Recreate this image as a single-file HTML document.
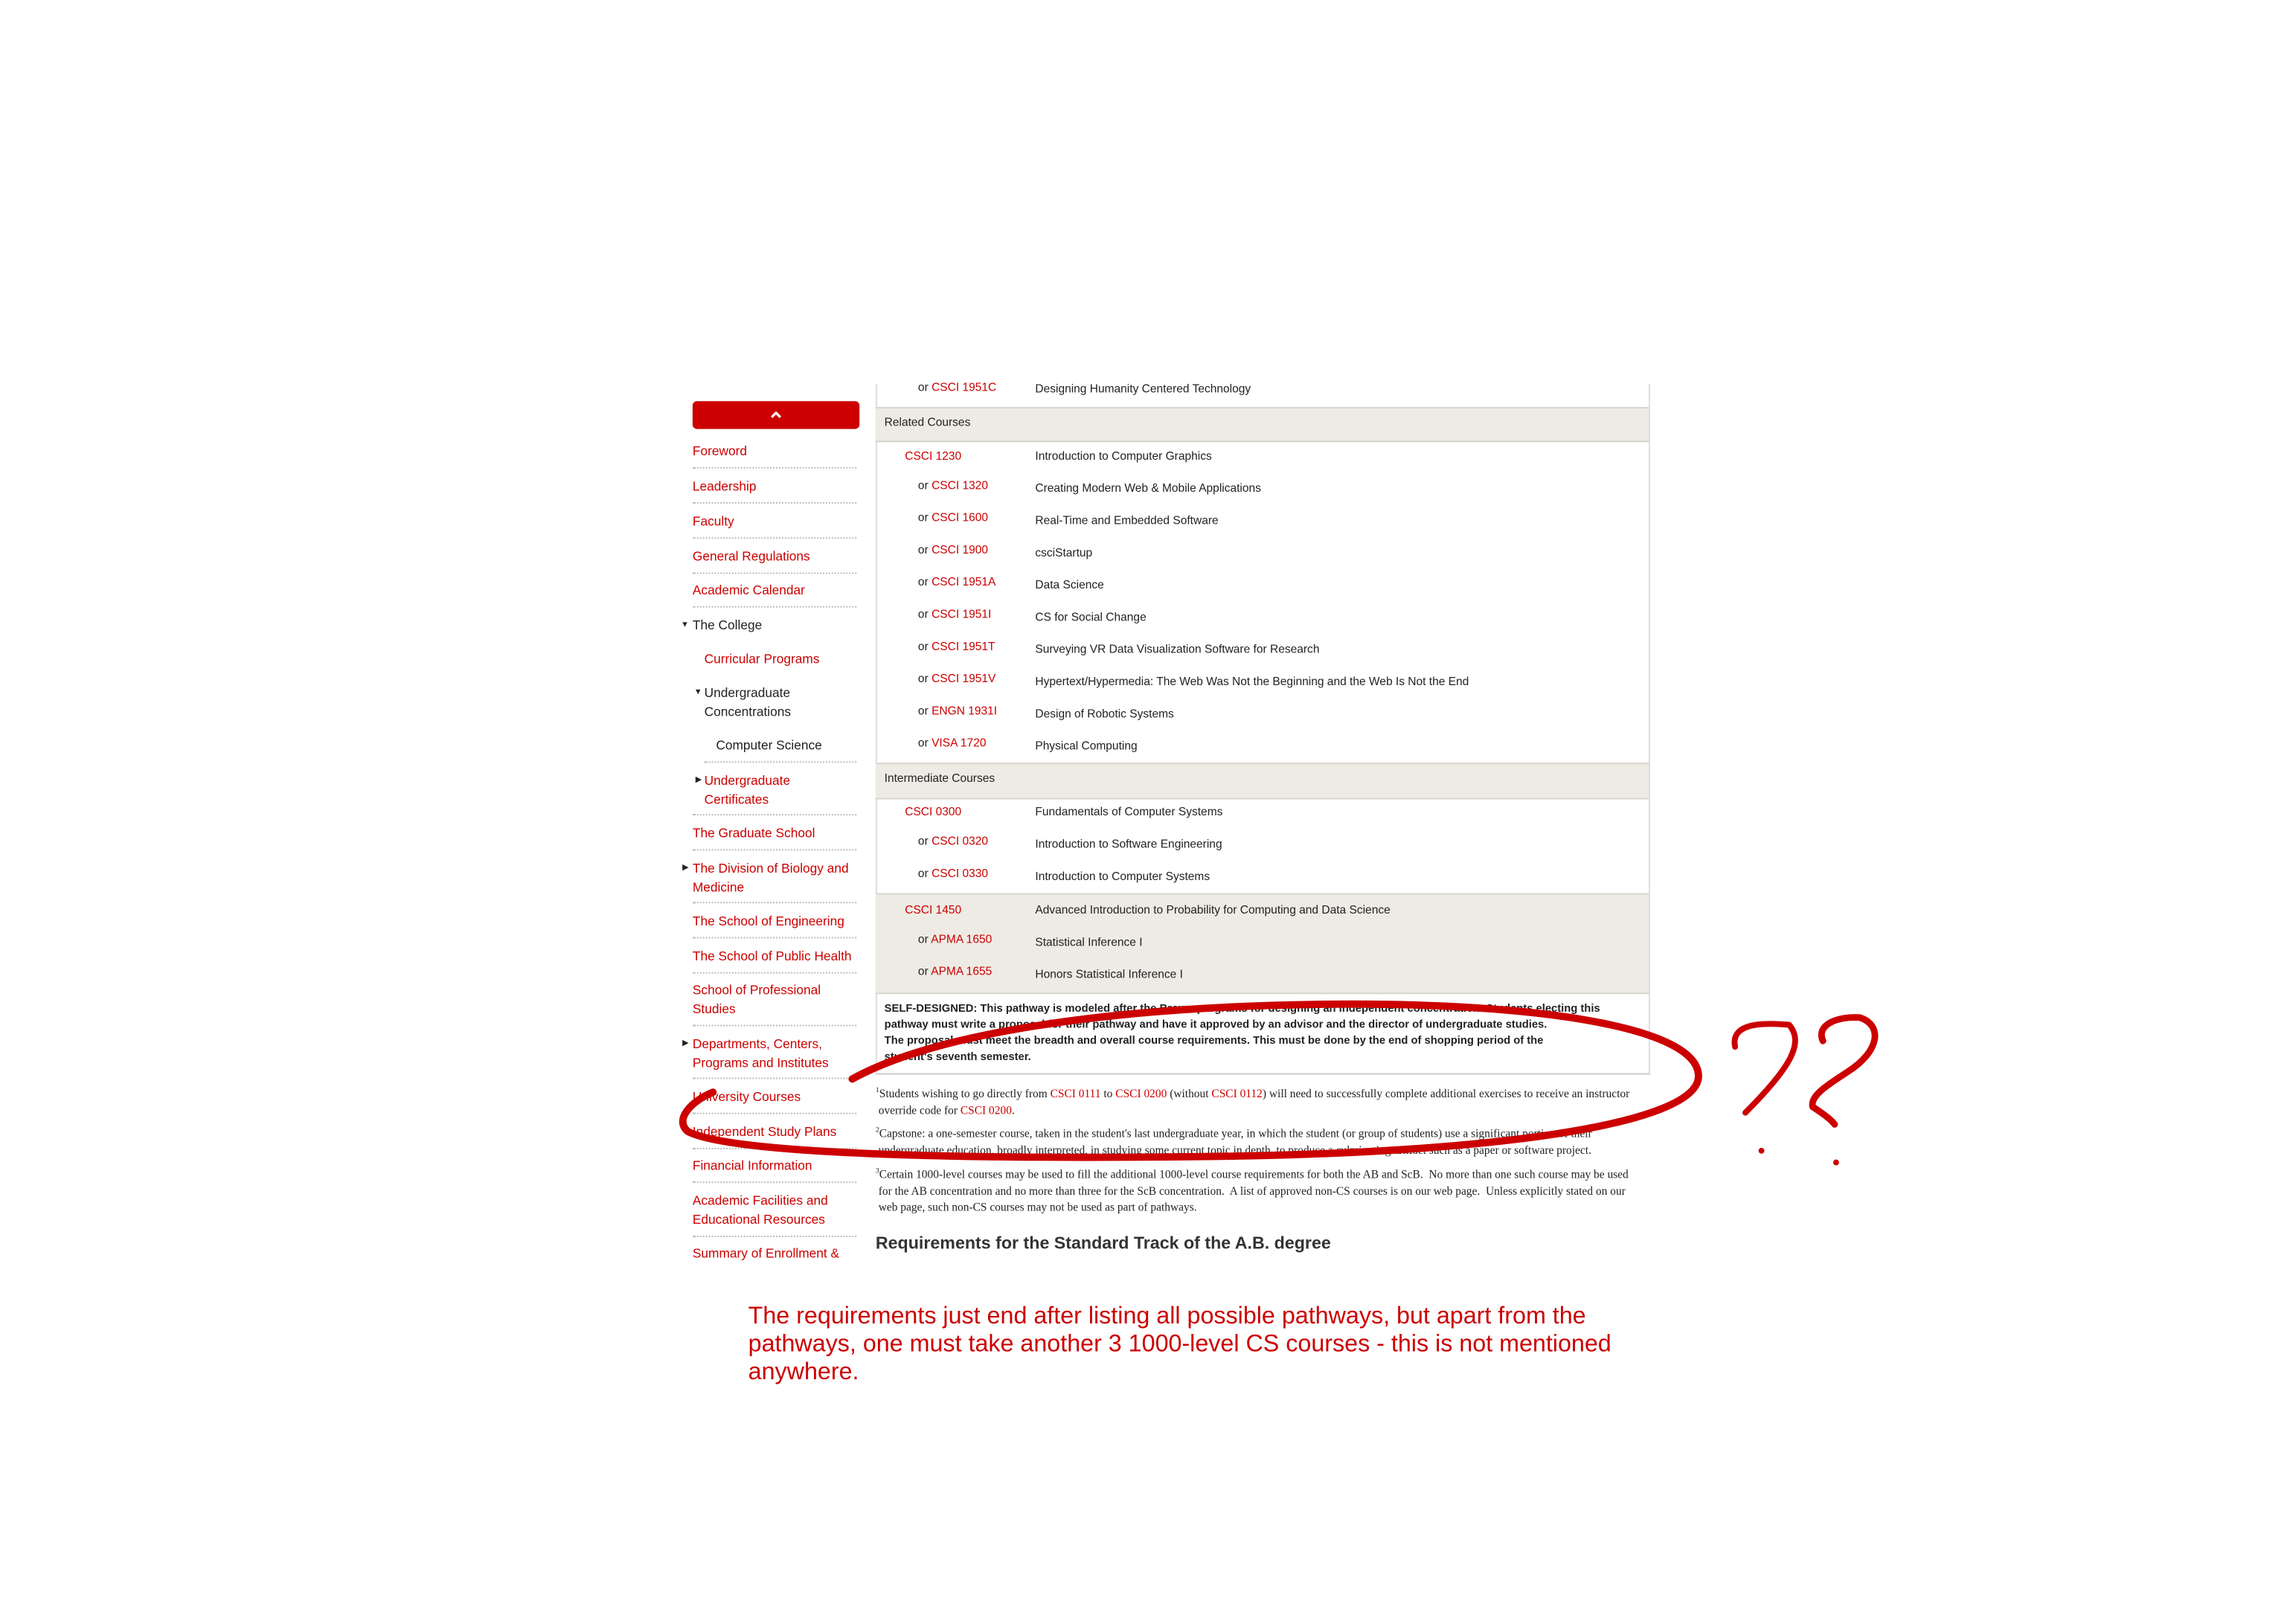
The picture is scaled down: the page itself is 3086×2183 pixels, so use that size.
<!DOCTYPE html>
<html><head><meta charset="utf-8">
<style>
html,body{margin:0;padding:0;background:#fff;}
body{width:3086px;height:2182px;overflow:hidden;position:relative;}
#w{position:absolute;left:0;top:0;width:1568px;height:1109px;transform:scale(1.968);transform-origin:0 0;font-family:"Liberation Sans",sans-serif;}
.a{position:absolute;white-space:nowrap;}
.nav{font-size:8.8px;color:#c00;line-height:12.5px;}
.blk{color:#222;}
.sep{position:absolute;left:473px;width:112px;border-top:1px dotted #bbb;}
.tri{position:absolute;font-size:5.5px;color:#222;}
.t{font-size:7.9px;color:#222;}
.r{color:#c00;}
.hdr{position:absolute;left:598px;width:528px;background:#eeebe5;border-top:1px solid #d8d5cf;border-bottom:1px solid #d8d5cf;}
.fn{font-family:"Liberation Serif",serif;font-size:7.85px;color:#222;line-height:11px;}
.note{font-size:16.4px;color:#c00;}
</style></head><body><div id="w">

<div class="a" style="left:473px;top:274px;width:114px;height:19px;background:#c00;border-radius:3px;"></div>
<svg class="a" style="left:526px;top:280px" width="8" height="6"><path d="M1 5 L4 2 L7 5" stroke="#fff" stroke-width="1.6" fill="none"/></svg>

<div class="a nav" style="left:473px;top:302px">Foreword</div><div class="sep" style="top:319px"></div>
<div class="a nav" style="left:473px;top:326px">Leadership</div><div class="sep" style="top:343px"></div>
<div class="a nav" style="left:473px;top:350px">Faculty</div><div class="sep" style="top:367px"></div>
<div class="a nav" style="left:473px;top:374px">General Regulations</div><div class="sep" style="top:391px"></div>
<div class="a nav" style="left:473px;top:397px">Academic Calendar</div><div class="sep" style="top:414px"></div>
<div class="tri" style="left:465px;top:424px">▼</div><div class="a nav blk" style="left:473px;top:421px">The College</div>
<div class="a nav" style="left:481px;top:444px">Curricular Programs</div>
<div class="tri" style="left:474px;top:470px">▼</div><div class="a nav blk" style="left:481px;top:467px">Undergraduate<br>Concentrations</div>
<div class="a nav blk" style="left:489px;top:503px">Computer Science</div><div class="sep" style="top:520px;left:481px;width:104px"></div>
<div class="tri" style="left:475px;top:530px">▶</div><div class="a nav" style="left:481px;top:527px">Undergraduate<br>Certificates</div><div class="sep" style="top:556px"></div>
<div class="a nav" style="left:473px;top:563px">The Graduate School</div><div class="sep" style="top:580px"></div>
<div class="tri" style="left:466px;top:590px">▶</div><div class="a nav" style="left:473px;top:587px">The Division of Biology and<br>Medicine</div><div class="sep" style="top:616px"></div>
<div class="a nav" style="left:473px;top:623px">The School of Engineering</div><div class="sep" style="top:640px"></div>
<div class="a nav" style="left:473px;top:647px">The School of Public Health</div><div class="sep" style="top:664px"></div>
<div class="a nav" style="left:473px;top:670px">School of Professional<br>Studies</div><div class="sep" style="top:700px"></div>
<div class="tri" style="left:466px;top:710px">▶</div><div class="a nav" style="left:473px;top:707px">Departments, Centers,<br>Programs and Institutes</div><div class="sep" style="top:736px"></div>
<div class="a nav" style="left:473px;top:743px">University Courses</div><div class="sep" style="top:760px"></div>
<div class="a nav" style="left:473px;top:767px">Independent Study Plans</div><div class="sep" style="top:784px"></div>
<div class="a nav" style="left:473px;top:790px">Financial Information</div><div class="sep" style="top:807px"></div>
<div class="a nav" style="left:473px;top:814px">Academic Facilities and<br>Educational Resources</div><div class="sep" style="top:844px"></div>
<div class="a nav" style="left:473px;top:850px">Summary of Enrollment &amp;</div>

<div class="a" style="left:598px;top:262px;width:527px;height:471px;border-left:1px solid #ddd;border-right:1px solid #ddd;border-bottom:1px solid #ccc;"></div>
<div class="hdr" style="top:278px;height:22px"></div>
<div class="hdr" style="top:521px;height:23px"></div>
<div class="hdr" style="top:610px;height:67px"></div>

<div class="a t" style="left:627px;top:260px">or <span class="r">CSCI 1951C</span></div><div class="a t" style="left:707px;top:261px">Designing Humanity Centered Technology</div>
<div class="a t" style="left:604px;top:284px">Related Courses</div>
<div class="a t r" style="left:618px;top:307px">CSCI 1230</div><div class="a t" style="left:707px;top:307px">Introduction to Computer Graphics</div>
<div class="a t" style="left:627px;top:327px">or <span class="r">CSCI 1320</span></div><div class="a t" style="left:707px;top:329px">Creating Modern Web &amp; Mobile Applications</div>
<div class="a t" style="left:627px;top:349px">or <span class="r">CSCI 1600</span></div><div class="a t" style="left:707px;top:351px">Real-Time and Embedded Software</div>
<div class="a t" style="left:627px;top:371px">or <span class="r">CSCI 1900</span></div><div class="a t" style="left:707px;top:373px">csciStartup</div>
<div class="a t" style="left:627px;top:393px">or <span class="r">CSCI 1951A</span></div><div class="a t" style="left:707px;top:395px">Data Science</div>
<div class="a t" style="left:627px;top:415px">or <span class="r">CSCI 1951I</span></div><div class="a t" style="left:707px;top:417px">CS for Social Change</div>
<div class="a t" style="left:627px;top:437px">or <span class="r">CSCI 1951T</span></div><div class="a t" style="left:707px;top:439px">Surveying VR Data Visualization Software for Research</div>
<div class="a t" style="left:627px;top:459px">or <span class="r">CSCI 1951V</span></div><div class="a t" style="left:707px;top:461px">Hypertext/Hypermedia: The Web Was Not the Beginning and the Web Is Not the End</div>
<div class="a t" style="left:627px;top:481px">or <span class="r">ENGN 1931I</span></div><div class="a t" style="left:707px;top:483px">Design of Robotic Systems</div>
<div class="a t" style="left:627px;top:503px">or <span class="r">VISA 1720</span></div><div class="a t" style="left:707px;top:505px">Physical Computing</div>
<div class="a t" style="left:604px;top:527px">Intermediate Courses</div>
<div class="a t r" style="left:618px;top:550px">CSCI 0300</div><div class="a t" style="left:707px;top:550px">Fundamentals of Computer Systems</div>
<div class="a t" style="left:627px;top:570px">or <span class="r">CSCI 0320</span></div><div class="a t" style="left:707px;top:572px">Introduction to Software Engineering</div>
<div class="a t" style="left:627px;top:592px">or <span class="r">CSCI 0330</span></div><div class="a t" style="left:707px;top:594px">Introduction to Computer Systems</div>
<div class="a t r" style="left:618px;top:617px">CSCI 1450</div><div class="a t" style="left:707px;top:617px">Advanced Introduction to Probability for Computing and Data Science</div>
<div class="a t" style="left:627px;top:637px">or <span class="r">APMA 1650</span></div><div class="a t" style="left:707px;top:639px">Statistical Inference I</div>
<div class="a t" style="left:627px;top:659px">or <span class="r">APMA 1655</span></div><div class="a t" style="left:707px;top:661px">Honors Statistical Inference I</div>

<div class="a t" style="left:604px;top:683px;font-weight:bold;line-height:11px;font-size:7.5px">SELF-DESIGNED: This pathway is modeled after the Brown programs for designing an independent concentration. Students electing this<br>pathway must write a proposal for their pathway and have it approved by an advisor and the director of undergraduate studies.<br>The proposal must meet the breadth and overall course requirements. This must be done by the end of shopping period of the<br>student's seventh semester.</div>

<div class="a fn" style="left:598px;top:740px"><sup style="font-size:5px">1</sup>Students wishing to go directly from <span class="r">CSCI 0111</span> to <span class="r">CSCI 0200</span> (without <span class="r">CSCI 0112</span>) will need to successfully complete additional exercises to receive an instructor<br>&nbsp;override code for <span class="r">CSCI 0200</span>.</div>
<div class="a fn" style="left:598px;top:767px"><sup style="font-size:5px">2</sup>Capstone: a one-semester course, taken in the student's last undergraduate year, in which the student (or group of students) use a significant portion of their<br>&nbsp;undergraduate education, broadly interpreted, in studying some current topic in depth, to produce a culminating artifact such as a paper or software project.</div>
<div class="a fn" style="left:598px;top:795px"><sup style="font-size:5px">3</sup>Certain 1000-level courses may be used to fill the additional 1000-level course requirements for both the AB and ScB.&nbsp; No more than one such course may be used<br>&nbsp;for the AB concentration and no more than three for the ScB concentration.&nbsp; A list of approved non-CS courses is on our web page.&nbsp; Unless explicitly stated on our<br>&nbsp;web page, such non-CS courses may not be used as part of pathways.</div>

<div class="a" style="left:598px;top:842px;font-size:11.8px;font-weight:bold;color:#333">Requirements for the Standard Track of the A.B. degree</div>

<div class="a note" style="left:511px;top:890px">The requirements just end after listing all possible pathways, but apart from the</div>
<div class="a note" style="left:511px;top:909px">pathways, one must take another 3 1000-level CS courses - this is not mentioned</div>
<div class="a note" style="left:511px;top:928px">anywhere.</div>

<svg class="a" style="left:0;top:0" width="1568" height="1109">
<g fill="none" stroke="#cc0000" stroke-linecap="round" stroke-linejoin="round">
<path d="M582 737 C640 705 760 688 900 686 C1040 684 1160 700 1160 735 C1160 768 1020 788 820 790 C650 792 500 788 470 773 C460 765 472 752 487 746" stroke-width="5"/>
<path d="M1185 715 C1182 700 1200 698 1222 700 C1232 712 1224 728 1192 760" stroke-width="4"/>
<path d="M1245 711 C1240 700 1255 694 1270 695 C1286 700 1284 718 1262 732 C1250 740 1236 748 1238 756 C1244 760 1250 764 1253 768" stroke-width="4.5"/>
<circle cx="1203" cy="786" r="2" fill="#cc0000" stroke="none"/>
<circle cx="1254" cy="794" r="2" fill="#cc0000" stroke="none"/>
</g></svg>
</div></body></html>
